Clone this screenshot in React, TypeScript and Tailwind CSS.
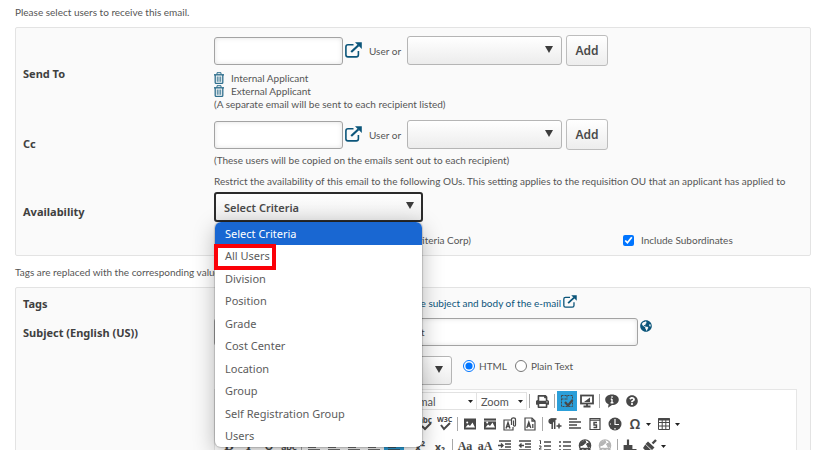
import type { ReactNode } from "react";
import { FaGlobeAmericas, FaPrint, FaQuestionCircle } from "react-icons/fa";

const CRITERIA = [
  "Select Criteria",
  "All Users",
  "Division",
  "Position",
  "Grade",
  "Cost Center",
  "Location",
  "Group",
  "Self Registration Group",
  "Users",
];

function PopOut({ small = false }: { small?: boolean }) {
  return (
    <svg
      viewBox="0 0 17 16"
      className={`text-[#0b557a] ${small ? "h-[13px] w-[14px]" : "h-4 w-[17px]"}`}
      fill="none"
      stroke="currentColor"
    >
      <path d="M8.500 2.800H3Q.9 2.800 .9 4.900v7.900Q.9 14.900 3 14.900h8.300Q13.400 14.900 13.400 12.800V9" strokeWidth="1.600" />
      <path d="M6.200 10 13.500 3.300" strokeWidth="2.200" />
      <path d="M10 .3H16.800V7L14.600 4.800 12.200 2.500Z" fill="currentColor" stroke="none" />
    </svg>
  );
}

function Trash() {
  return (
    <svg viewBox="0 0 10 12" className="h-3 w-[10px] text-[#2f6f8d]" fill="none" stroke="currentColor">
      <path d="M0 2.800h10" strokeWidth="1.400" />
      <path d="M3 2.500V.7h4v1.800" />
      <path d="M1.200 3v7.400q0 1 1 1h5.600q1 0 1-1V3" strokeWidth="1.300" />
      <path d="M3.300 4.500v5.300M5 4.500v5.300M6.700 4.500v5.300" strokeWidth=".9" />
    </svg>
  );
}

function Picker({ label, options, className, active = false }: { label: string; options: string[]; className: string; active?: boolean }) {
  return (
    <div className={`relative ${className}`}>
      <select
        aria-label={label}
        className={`h-full w-full appearance-none rounded-[3px] border bg-linear-to-b from-white to-[#ececec] px-2 font-['Noto_Sans',sans-serif] text-[11px] font-semibold text-[#4a4a4a] outline-none ${active ? "border-2 border-[#2b2b2b]" : "border-[#b5b5b5]"}`}
      >
        {options.map((o) => (
          <option key={o}>{o}</option>
        ))}
      </select>
      <svg viewBox="0 0 8 7" className="pointer-events-none absolute top-[10px] right-[9px] h-[7px] w-2" fill="#3c3c3c">
        <path d="M0 0h8L4 7z" />
      </svg>
    </div>
  );
}

function Recipient({ name }: { name: string }) {
  return (
    <div className="flex h-[31px] items-center">
      <input
        type="text"
        aria-label={name}
        className="h-7 w-[129px] rounded-[3px] border border-[#a3a3a3] bg-white px-2 shadow-[inset_0_0_5px_#e2e2e2] outline-none"
      />
      <button type="button" aria-label={`Choose ${name} user`} className="ml-[2px] pb-[2px]">
        <PopOut />
      </button>
      <span className="w-[45px] pt-[2px] pl-[7px]">User or</span>
      <Picker label={`${name} role`} options={[""]} className="h-[29px] w-[155px]" />
      <button
        type="button"
        className="ml-1 h-[31px] w-[42px] rounded-[3px] border border-[#bdbdbd] bg-linear-to-b from-white to-[#ededed] font-['Noto_Sans',sans-serif] text-xs font-semibold text-[#4a4a4a]"
      >
        Add
      </button>
    </div>
  );
}

function Row({ label, children }: { label: string; children: ReactNode }) {
  return (
    <div className="grid grid-cols-[191px_1fr] items-center">
      <div className="font-['Noto_Sans',sans-serif] text-[11px] font-bold text-[#404040]">{label}</div>
      <div className="min-w-0">{children}</div>
    </div>
  );
}

function CriteriaMenu() {
  return (
    <ul
      role="listbox"
      aria-label="Criteria"
      className="absolute top-[30px] left-px z-10 flex h-[225px] w-[207px] flex-col rounded-md bg-white font-['Noto_Sans',sans-serif] text-[11px] text-[#5c5c5c] shadow-[0_6px_22px_rgba(0,0,0,0.28),0_0_1px_1px_rgba(0,0,0,0.16)]"
    >
      {CRITERIA.map((item, i) => (
        <li
          key={item}
          role="option"
          aria-selected={i === 0}
          className={`relative flex flex-1 items-center pl-[10px] ${i === 0 ? "rounded-t-md bg-[#1967d2] text-white" : ""}`}
        >
          {item}
          {i === 1 && <span className="absolute -top-px -left-px h-[26px] w-[62px] border-4 border-[#fb0007]" />}
        </li>
      ))}
    </ul>
  );
}

function Tool({ name, children, on = false }: { name: string; children?: ReactNode; on?: boolean }) {
  return (
    <button
      type="button"
      aria-label={name}
      className={`flex h-5 w-5 shrink-0 items-center justify-center leading-none text-[#484848] ${on ? "bg-[#2b9fd9]" : ""}`}
    >
      {children}
    </button>
  );
}

function Draw({ children }: { children: ReactNode }) {
  return (
    <svg viewBox="0 0 14 14" className="h-[14px] w-[14px]" fill="none" stroke="currentColor" strokeWidth="1.200">
      {children}
    </svg>
  );
}

const Sep = () => <span className="mx-[2px] h-[14px] w-px shrink-0 bg-[#a8a8a8]" />;

const Caret = () => (
  <svg viewBox="0 0 5 3" className="mr-[3px] ml-px h-[3px] w-[5px] shrink-0" fill="#222">
    <path d="M0 0h5L2.500 3z" />
  </svg>
);

const AlignLines = () => (
  <Draw>
    <path d="M1 2h8M1 5h12M1 8h8M1 11h12" strokeWidth="1.500" />
  </Draw>
);

const IndentLines = ({ out = false }: { out?: boolean }) => (
  <Draw>
    <path d="M1 2h12M7 5h6M7 8h6M1 11h12" strokeWidth="1.500" />
    <path d={out ? "M6 6.500H1.500M3.500 4.500l-2 2 2 2" : "M0 6.500h5M3 4.500l2 2-2 2"} strokeWidth="1.400" />
  </Draw>
);

const Frame = ({ title = false }: { title?: boolean }) => (
  <Draw>
    <rect x="1" y="1.500" width="12" height="11" fill="currentColor" stroke="none" />
    {title && <path d="M1 4h12" stroke="#fff" strokeWidth=".8" />}
    <path d="M2.500 10.500 5 7.500l2 1.500 2.500-3.500 2.500 5z" fill="#fff" stroke="none" />
    <circle cx="4.200" cy="5.500" r="1" fill="#fff" stroke="none" />
  </Draw>
);

function LinkedGlobe({ muted = false }: { muted?: boolean }) {
  return (
    <svg viewBox="0 0 14 14" className={`h-[14px] w-[14px] ${muted ? "text-[#b5b5b5]" : "text-[#484848]"}`} fill="none" stroke="currentColor">
      <circle cx="7" cy="6.500" r="5.600" strokeWidth="1.400" fill={muted ? "none" : "#fff"} />
      <path d="M3 3.500 7 1.500l1 2-3 2.500-3 1zM8.500 5l3-1.500.8 3.500-2 1.500z" fill="currentColor" />
      <path d="M2 11.500q0-2 2-2h2q2 0 2 2M6 11.500q0-2 2-2h2q2 0 2 2" strokeWidth="1.600" />
    </svg>
  );
}

function Editor() {
  return (
    <div className="mt-1 mr-[6px] border border-[#e6e6e6] bg-white pt-px pb-3 pl-1">
      <div className="flex h-5 items-center text-[11px]">
        <div className="w-[176px] shrink-0" />
        <div className="flex h-[18px] w-[82px] items-center justify-between border border-[#e2e2e2] pl-1">
          <span>Normal</span>
          <Caret />
        </div>
        <div className="flex h-[18px] w-[50px] items-center justify-between border-y border-r border-[#e2e2e2] pl-1">
          <span>Zoom</span>
          <Caret />
        </div>
        <Sep />
        <Tool name="Print"><FaPrint size={13} /></Tool>
        <Sep />
        <Tool name="Show borders" on>
          <Draw>
            <rect x="1.500" y="1.500" width="11" height="11" strokeDasharray="2 1" strokeWidth="1" />
            <path d="M1.500 5h6M7 1.500v4" strokeDasharray="2 1" strokeWidth="1" />
            <path d="M5 8l3 3.500L12.500 6" strokeWidth="2.200" />
          </Draw>
        </Tool>
        <Tool name="Preview">
          <Draw>
            <rect x="1" y="1.500" width="12" height="8" strokeWidth="1.800" />
            <path d="M4 8 10 3.500V8z" fill="currentColor" stroke="none" />
            <path d="M7 10v2M3.500 12.500h7" strokeWidth="1.800" />
          </Draw>
        </Tool>
        <Sep />
        <Tool name="Information">
          <Draw>
            <path d="M7 .5c4 0 6.800 2.200 6.800 5.200S11 11 7 11l-4 2.800.6-3.600C1.500 9.300.2 7.700.2 5.700.2 2.700 3 .5 7 .5z" fill="currentColor" stroke="none" />
            <path d="M7 5v3.800M5.800 5.200H7M5.600 8.800h2.800M6.300 3h1.500" stroke="#fff" strokeWidth="1.400" />
          </Draw>
        </Tool>
        <Tool name="Help"><FaQuestionCircle size={12} /></Tool>
      </div>
      <div className="mt-[3px] flex h-5 items-center">
        <div className="w-[196px] shrink-0" />
        <Tool name="Spell check">
          <svg viewBox="0 0 16 14" className="h-[14px] w-4">
            <text x="1" y="6" fontSize="8" fontWeight="700" fontFamily="Noto Sans, sans-serif" fill="#484848">abc</text>
            <path d="M5 9l3 3 6-6" fill="none" stroke="#484848" strokeWidth="2" />
          </svg>
        </Tool>
        <Tool name="Validate">
          <svg viewBox="0 0 16 14" className="h-[14px] w-4">
            <text x="0" y="5" fontSize="7" fontWeight="700" fontFamily="Noto Sans, sans-serif" fill="#484848">W3C</text>
            <path d="M4 8l3 4 6-6" fill="none" stroke="#484848" strokeWidth="2" />
          </svg>
        </Tool>
        <Sep />
        <Tool name="Insert image"><Frame /></Tool>
        <Tool name="Insert template"><Frame title /></Tool>
        <Tool name="Attach file">
          <Draw>
            <path d="M8 3H1v10h9V10" />
            <path d="M3 11.500l2-6 2 6M3.800 9.500h2.600" strokeWidth="1.400" />
            <path d="M8.500 8V2.500q0-1.700 2-1.700t2 1.700V8q0 1.200-1 1.200t-1-1.200V3.500" />
          </Draw>
        </Tool>
        <Tool name="Insert document">
          <Draw>
            <path d="M2 1h7l3 3v9H2z" />
            <path d="M3.800 11l2-6 2 6M4.600 9h2.600M9 1v3h3M9.800 7v4" strokeWidth="1.300" />
          </Draw>
        </Tool>
        <Sep />
        <Tool name="New paragraph">
          <Draw>
            <path d="M7 2H3.500q-2.500 0-2.500 2.200T3.800 6.500z" fill="currentColor" />
            <path d="M4.200 2v10M6.700 2v10M2.500 2h6M8.500 9h5M11 6.500v5" strokeWidth="1.500" />
          </Draw>
        </Tool>
        <Tool name="Paragraph"><AlignLines /></Tool>
        <Tool name="Insert date">
          <Draw>
            <path d="M2 1.500h10v11H2zM2 3.200h10" strokeWidth="1.200" />
            <path d="M9 5.500H6V8h2.500v2.500H5.500" strokeWidth="1.400" />
          </Draw>
        </Tool>
        <Tool name="Insert time">
          <Draw>
            <circle cx="7" cy="7" r="6.500" fill="currentColor" stroke="none" />
            <path d="M7 2v5.500h4M2 7h1M7 11v1.500" stroke="#fff" />
          </Draw>
        </Tool>
        <Tool name="Insert symbol"><span className="font-['Noto_Sans',sans-serif] text-sm font-semibold">Ω</span></Tool>
        <Caret />
        <Tool name="Insert table">
          <Draw>
            <path d="M1.500 1.500h11v11h-11zM1.500 5.500h11M1.500 9h11M5.200 3v9.500M8.800 3v9.500" strokeWidth="1" />
            <path d="M1 2.500h12" strokeWidth="2" />
          </Draw>
        </Tool>
        <Caret />
      </div>
      <div className="mt-[2px] flex h-5 items-center">
        <Tool name="Bold"><b className="font-['Liberation_Serif',serif] text-sm">B</b></Tool>
        <Tool name="Italic"><i className="font-['Liberation_Serif',serif] text-sm font-bold">I</i></Tool>
        <Tool name="Underline"><u className="text-xs font-bold">U</u></Tool>
        <Tool name="Strikethrough"><s className="text-[10px] font-bold">abc</s></Tool>
        <Sep />
        <Tool name="Align left"><AlignLines /></Tool>
        <Tool name="Align center"><AlignLines /></Tool>
        <Tool name="Align right"><AlignLines /></Tool>
        <Tool name="Justify"><AlignLines /></Tool>
        <Tool name="No alignment" on><AlignLines /></Tool>
        <div className="w-[6px] shrink-0" />
        <Tool name="Superscript"><span className="font-['Noto_Sans',sans-serif] text-[11px] font-bold">x²</span></Tool>
        <Tool name="Subscript"><span className="font-['Noto_Sans',sans-serif] text-[11px] font-bold">x₂</span></Tool>
        <Sep />
        <Tool name="Change case"><span className="font-['Liberation_Serif',serif] text-xs font-bold">Aa</span></Tool>
        <Tool name="Toggle case"><span className="font-['Liberation_Serif',serif] text-xs font-bold">aA</span></Tool>
        <Tool name="Indent"><IndentLines /></Tool>
        <Tool name="Outdent"><IndentLines out /></Tool>
        <Tool name="Numbered list">
          <Draw>
            <path d="M6 3h7M6 7h7M6 11h7" strokeWidth="1.500" />
            <path d="M1.500 1.500h1V5M1 7h2v1.500L1 10h2.500" strokeWidth="1" />
          </Draw>
        </Tool>
        <Tool name="Bulleted list">
          <Draw>
            <path d="M5 3h8M5 7h8M5 11h8M1 3h2M1 7h2M1 11h2" strokeWidth="1.600" />
          </Draw>
        </Tool>
        <Tool name="Insert link"><LinkedGlobe /></Tool>
        <Tool name="Remove link"><LinkedGlobe muted /></Tool>
        <Sep />
        <Tool name="Clean formatting">
          <Draw>
            <path d="M5 .5v6" strokeWidth="2.200" />
            <path d="M1.500 7h7v5h-7zM9 11h4.500" fill="currentColor" strokeWidth="1.800" />
          </Draw>
        </Tool>
        <Tool name="Format painter">
          <Draw>
            <path d="M9.500 4.500 13 1" strokeWidth="2.400" />
            <path d="M5 2.500 11.500 8.500 9 11 2.500 5zM2.300 5.500 8.500 11.500l-4 2.300L0 9z" fill="currentColor" stroke="none" />
          </Draw>
        </Tool>
        <Caret />
      </div>
    </div>
  );
}

export default function App() {
  return (
    <main className="h-screen overflow-hidden bg-white pr-[14px] pl-[15px] font-[Lato,'Noto_Sans',sans-serif] text-[10px] leading-[13px] text-[#555]">
      <p className="pt-[6px]">Please select users to receive this email.</p>

      <section className="mt-2 flex flex-col gap-2 rounded-[2px] border border-[#e3e3e3] bg-[#fafafa] px-[7px] pt-[7px] pb-2">
        <Row label="Send To">
          <Recipient name="Send To" />
          <ul className="mt-[6px]">
            {["Internal Applicant", "External Applicant"].map((name) => (
              <li key={name} className="flex h-[13px] items-center gap-[7px]">
                <button type="button" aria-label={`Remove ${name}`} className="pb-px"><Trash /></button>
                {name}
              </li>
            ))}
          </ul>
          <p>(A separate email will be sent to each recipient listed)</p>
        </Row>

        <Row label="Cc">
          <Recipient name="Cc" />
          <p className="mt-1">(These users will be copied on the emails sent out to each recipient)</p>
        </Row>

        <Row label="Availability">
          <p>
            Restrict the availability of this email to the following OUs. This setting applies to the requisition OU that an
            applicant has applied to
          </p>
          <div className="relative mt-1 w-[209px]">
            <Picker label="Availability criteria" options={CRITERIA} className="h-[30px] w-full" active />
            <CriteriaMenu />
          </div>
          <div className="mt-3 flex items-center">
            <span className="w-[257px] text-right">(Criteria Corp)</span>
            <label className="ml-[152px] flex items-center gap-[7px]">
              <input type="checkbox" defaultChecked className="h-[11px] w-[11px] accent-[#0075ff]" />
              Include Subordinates
            </label>
          </div>
        </Row>
      </section>

      <p className="mt-[10px]">Tags are replaced with the corresponding values.</p>

      <section className="mt-2 rounded-[2px] border border-[#e3e3e3] bg-[#fafafa] px-[7px] pt-[7px] pb-4">
        <Row label="Tags">
          <div className="flex h-4 items-center text-[#0b557a]">
            <a href="#tags" className="w-[347px] text-right">Tags for use in the subject and body of the e-mail</a>
            <button type="button" aria-label="Open tag list" className="ml-[2px] pb-1"><PopOut small /></button>
          </div>
        </Row>
        <div className="mt-[7px] grid grid-cols-[191px_1fr]">
          <label htmlFor="subject" className="pt-2 font-['Noto_Sans',sans-serif] text-[11px] font-bold text-[#404040]">Subject (English (US))</label>
          <div className="min-w-0">
            <div className="flex">
              <input
                id="subject"
                type="text"
                defaultValue="Thank you for applying with us as an applicant"
                className="h-7 w-[424px] rounded-[3px] border border-[#a3a3a3] bg-white px-2 shadow-[inset_0_0_5px_#e2e2e2] outline-none"
              />
              <button type="button" aria-label="Translate subject" className="mt-[2px] ml-[2px] h-3 text-[#0b557a]">
                <FaGlobeAmericas size={12} />
              </button>
            </div>
            <div className="mt-[10px] flex">
              <div className="w-[78px]" />
              <Picker label="Email language" options={["English (US)"]} className="h-[29px] w-40" />
              <div className="ml-[11px] flex h-5 items-center gap-2">
                <label className="flex items-center gap-1">
                  <input type="radio" name="format" defaultChecked className="h-3 w-3 accent-[#0075ff]" />
                  HTML
                </label>
                <label className="flex items-center gap-1">
                  <input type="radio" name="format" className="h-3 w-3" />
                  Plain Text
                </label>
              </div>
            </div>
            <Editor />
          </div>
        </div>
      </section>
    </main>
  );
}
